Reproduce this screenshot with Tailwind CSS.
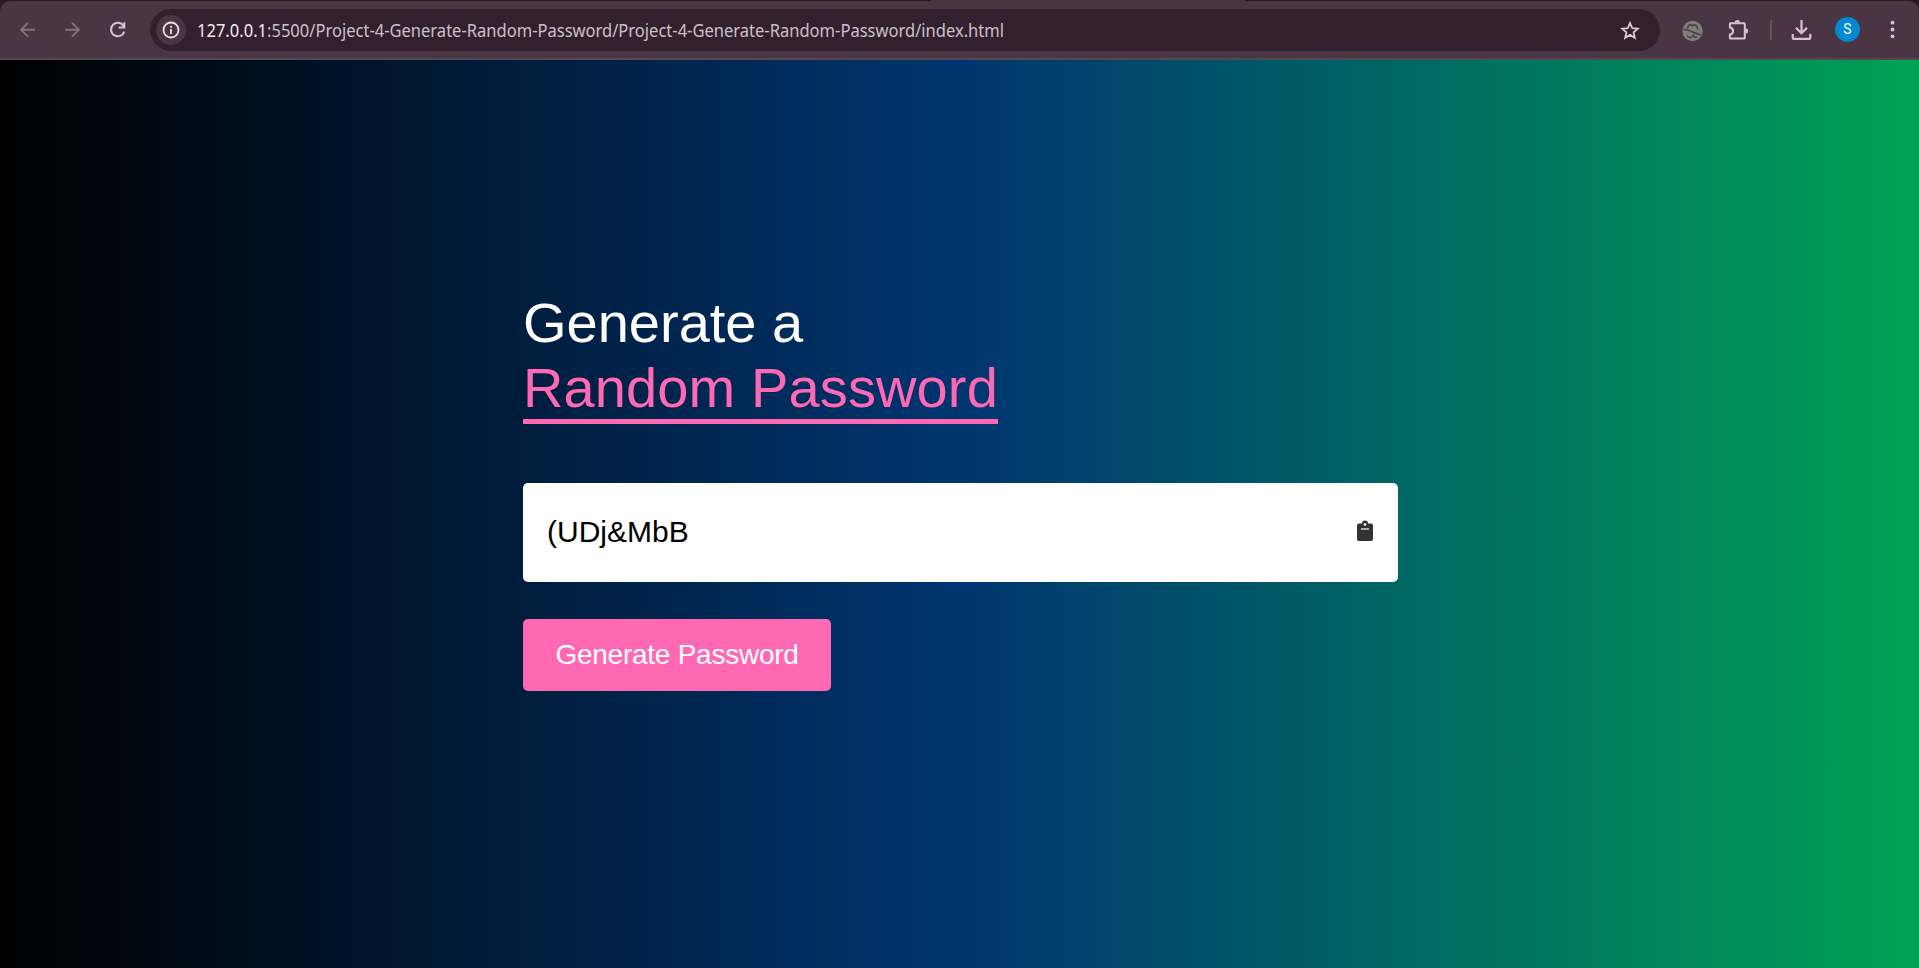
<!DOCTYPE html>
<html lang="en">
<head>
<meta charset="utf-8">
<title>Random Password Generator</title>
<script src="https://cdn.jsdelivr.net/npm/@tailwindcss/browser@4"></script>
</head>
<body class="h-screen overflow-hidden flex flex-col bg-[#2b1827]">
<header class="h-[60px] shrink-0 pt-px">
  <div class="relative h-[59px] rounded-t-[10px] border-b-2 border-[#544950] bg-[#4a3544] flex items-start">
    <div class="absolute -top-px left-[931px] w-[314px] h-px bg-[#4a3544]"></div>
    <svg class="ml-4 mt-[17px] size-6 shrink-0" viewBox="0 0 24 24" fill="none" stroke="#89727f" stroke-width="1.9"><path d="M19 11.7H5.3M12 4.8 5.1 11.7 12 18.6"/></svg>
    <svg class="ml-5 mt-[17px] size-6 shrink-0" viewBox="0 0 24 24" fill="none" stroke="#89727f" stroke-width="1.9"><path d="M5 11.7h13.7M12 4.8l6.9 6.9-6.9 6.9"/></svg>
    <svg class="ml-[22px] mt-[17px] size-6 shrink-0" viewBox="0 0 24 24" fill="none" stroke="#e0bfd5" stroke-width="2"><path d="M17.8 8.2A6.8 6.8 0 1 0 18.3 13.600M18.300 4.200v5.300h-5.600"/></svg>
    <div class="ml-5 mt-2 h-[42px] w-[1510px] shrink-0 rounded-full bg-[#33202f] flex items-center pl-1.5">
      <div class="size-[30px] rounded-full bg-[#4a3544] flex items-center justify-center">
        <svg class="size-[18px]" viewBox="0 0 18 18" fill="none" stroke="#eadfe7" stroke-width="1.8"><circle cx="9" cy="9" r="7.5"/><path d="M9 8v5M9 4.7v2"/></svg>
      </div>
      <svg class="ml-[11px] w-[1423px] h-6 shrink-0 font-['Noto_Sans',sans-serif] text-[17.5px]"><text x="0" y="19" textLength="807" lengthAdjust="spacingAndGlyphs" fill="#cbc0c8"><tspan fill="#f2e9f0">127.0.0.1</tspan>:5500/Project-4-Generate-Random-Password/Project-4-Generate-Random-Password/index.html</text></svg>
      <svg class="size-5 shrink-0" viewBox="0 0 20 20" fill="none" stroke="#d9cbd5" stroke-width="1.8"><path d="m10 3 2.200 5.100 5.600.5-4.200 3.700 1.200 5.500-4.800-2.900-4.800 2.900 1.200-5.500L2.200 8.600l5.600-.5z"/></svg>
    </div>
    <svg class="ml-[22px] mt-[18.500px] size-[22px] shrink-0" viewBox="0 0 22 22"><circle cx="10.500" cy="11" r="10.200" fill="#7d7f7a"/><g fill="none" stroke="#4a3544" stroke-width="1.400"><path d="M1.500 9.500q5 .3 8 2l9.500 3.500M5.500 8.500q1-4.500 3-3.500 2 1 4 0 2-.5 3.500 4.500M5 15.500q1.500 2.500 3.500 2t3-2.500q1 3 3.500 2"/></g></svg>
    <svg class="ml-[23px] mt-[17.500px] size-[22px] shrink-0" viewBox="0 0 22 22"><path d="M3.500 4.300h13.700q.6 0 .6.600V19q0 .6-.6.600H3.500q-.6 0-.6-.6v-3.500q3.200-.5 3.200-3.500T2.900 8.400V4.900q0-.6.600-.6z" fill="none" stroke="#e0bfd5" stroke-width="2" stroke-linejoin="round"/><path d="M7.700 3.600a2.700 2.700 0 0 1 5.400 0zM18.400 9.300a2.700 2.700 0 0 1 0 5.400z" fill="#e0bfd5"/></svg>
    <div class="ml-[21px] mt-[19px] h-5 w-0.5 bg-[#66505f]"></div>
    <svg class="ml-[19px] mt-[18px] size-[22px] shrink-0" viewBox="0 0 22 22" fill="none" stroke="#e0bfd5" stroke-width="2.200"><path d="M10.500 1v13M5 8.700l5.500 5.500L16 8.700M1.700 15v3.700q0 1.200 1.200 1.200h15.200q1.200 0 1.200-1.200V15"/></svg>
    <div class="ml-[22px] mt-4 size-[25px] shrink-0 rounded-full bg-[#0388d1] text-white flex items-center justify-center font-[Roboto,sans-serif] text-[14px]">S</div>
    <svg class="ml-[30px] mt-[19px] w-[5px] h-5 shrink-0" viewBox="0 0 5 20" fill="#e0bfd5"><circle cx="2.500" cy="2.700" r="1.900"/><circle cx="2.500" cy="9.500" r="1.900"/><circle cx="2.500" cy="16.300" r="1.900"/></svg>
  </div>
</header>
<main class="flex-1 bg-[linear-gradient(to_right,#000000,#003570_50%,#00a254)] pt-[230px] pl-[523px] font-['Liberation_Sans',Arial,sans-serif]">
  <div class="w-[875px]">
    <h1 class="text-[56px] leading-[65px] font-normal text-white">Generate a<br><span class="inline-block h-[69px] border-b-5 border-[#ff69b4] text-[#ff69b4] tracking-[0.12px]">Random Password</span></h1>
    <div class="mt-[59px] h-[99px] rounded-[5px] bg-white flex items-center justify-between pl-6 pr-6 pb-[3px]">
      <span class="text-[30px] text-black">(UDj&amp;MbB</span>
      <svg class="w-[18px] h-[22px]" viewBox="0 0 18 22"><path fill="#333" d="M3 3.500h3a3 3 0 0 1 6 0h3q2 0 2 2V19q0 2-2 2H3q-2 0-2-2V5.500q0-2 2-2z"/><circle cx="9" cy="4.500" r="1.300" fill="#fff"/><path stroke="#fff" stroke-width="1.200" d="M5 9h8"/></svg>
    </div>
    <button class="mt-[37px] h-[72px] w-[308px] rounded-[5px] bg-[#ff69b4] text-white text-[28px] tracking-[-0.25px] whitespace-nowrap">Generate Password</button>
  </div>
</main>
</body>
</html>
